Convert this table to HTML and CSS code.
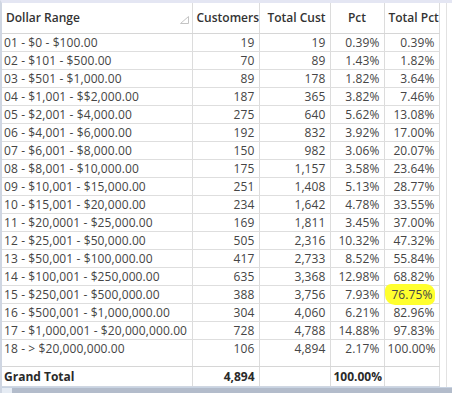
FILE: index.html
```html
<!DOCTYPE html>
<html lang="en">
<head>
    <meta charset="UTF-8">
    <title>Dollar Range Pivot</title>
    <link rel="stylesheet" href="styles.css">
</head>
<body>
    <div class="frame">
        <div class="sheet">
            <table class="pivot">
                <colgroup>
                    <col class="c-range">
                    <col class="c-cust">
                    <col class="c-total">
                    <col class="c-pct">
                    <col class="c-tpct">
                </colgroup>
                <thead>
                    <tr>
                        <th class="left">
                            <div class="head-cell">Dollar Range
                                <svg class="sort" width="9" height="8" viewBox="0 0 9 8"><path d="M0.5 7.5 L8.5 7.5 L8.5 0.5 Z" fill="none" stroke="#c4c4c4" stroke-width="1"/></svg>
                            </div>
                        </th>
                        <th>Customers</th>
                        <th>Total Cust</th>
                        <th class="mid">Pct</th>
                        <th>Total Pct</th>
                    </tr>
                </thead>
                <tbody>
                    <tr><td class="left">01 - $0 - $100.00</td><td>19</td><td>19</td><td>0.39%</td><td>0.39%</td></tr>
                    <tr><td class="left">02 - $101 - $500.00</td><td>70</td><td>89</td><td>1.43%</td><td>1.82%</td></tr>
                    <tr><td class="left">03 - $501 - $1,000.00</td><td>89</td><td>178</td><td>1.82%</td><td>3.64%</td></tr>
                    <tr><td class="left">04 - $1,001 - $$2,000.00</td><td>187</td><td>365</td><td>3.82%</td><td>7.46%</td></tr>
                    <tr><td class="left">05 - $2,001 - $4,000.00</td><td>275</td><td>640</td><td>5.62%</td><td>13.08%</td></tr>
                    <tr><td class="left">06 - $4,001 - $6,000.00</td><td>192</td><td>832</td><td>3.92%</td><td>17.00%</td></tr>
                    <tr><td class="left">07 - $6,001 - $8,000.00</td><td>150</td><td>982</td><td>3.06%</td><td>20.07%</td></tr>
                    <tr><td class="left">08 - $8,001 - $10,000.00</td><td>175</td><td>1,157</td><td>3.58%</td><td>23.64%</td></tr>
                    <tr><td class="left">09 - $10,001 - $15,000.00</td><td>251</td><td>1,408</td><td>5.13%</td><td>28.77%</td></tr>
                    <tr><td class="left">10 - $15,001 - $20,000.00</td><td>234</td><td>1,642</td><td>4.78%</td><td>33.55%</td></tr>
                    <tr><td class="left">11 - $20,0001 - $25,000.00</td><td>169</td><td>1,811</td><td>3.45%</td><td>37.00%</td></tr>
                    <tr><td class="left">12 - $25,001 - $50,000.00</td><td>505</td><td>2,316</td><td>10.32%</td><td>47.32%</td></tr>
                    <tr><td class="left">13 - $50,001 - $100,000.00</td><td>417</td><td>2,733</td><td>8.52%</td><td>55.84%</td></tr>
                    <tr><td class="left">14 - $100,001 - $250,000.00</td><td>635</td><td>3,368</td><td>12.98%</td><td>68.82%</td></tr>
                    <tr><td class="left">15 - $250,001 - $500,000.00</td><td>388</td><td>3,756</td><td>7.93%</td><td><span class="marker">76.75%</span></td></tr>
                    <tr><td class="left">16 - $500,001 - $1,000,000.00</td><td>304</td><td>4,060</td><td>6.21%</td><td>82.96%</td></tr>
                    <tr><td class="left">17 - $1,000,001 - $20,000,000.00</td><td>728</td><td>4,788</td><td>14.88%</td><td>97.83%</td></tr>
                    <tr class="last"><td class="left">18 - &gt; $20,000,000.00</td><td>106</td><td>4,894</td><td>2.17%</td><td>100.00%</td></tr>
                    <tr class="spacer"><td></td><td></td><td></td><td></td><td></td></tr>
                    <tr class="grand"><td class="left">Grand Total</td><td>4,894</td><td></td><td>100.00%</td><td></td></tr>
                </tbody>
            </table>
            <div class="side"></div>
        </div>
        <div class="hscroll">
            <div class="thumb"></div>
        </div>
    </div>
</body>
</html>
```

FILE: styles.css
```css
* {
    margin: 0;
    padding: 0;
    box-sizing: border-box;
}

body {
    background: #dfe5ee;
    font-family: 'Open Sans', 'Noto Sans', sans-serif;
    color: #454545;
}

.frame {
    width: 452px;
    height: 393px;
    border-top: 3px solid #e4e6f3;
    border-left: 2px solid #cfd6e2;
    background: #ffffff;
    display: flex;
    flex-direction: column;
}

.sheet {
    display: flex;
    flex: 1;
}

.pivot {
    border-collapse: collapse;
    table-layout: fixed;
    width: 437px;
    font-size: 12px;
}

.c-range { width: 190px; }
.c-cust { width: 67px; }
.c-total { width: 71px; }
.c-pct { width: 54px; }
.c-tpct { width: 55px; }

.pivot th {
    height: 30px;
    font-weight: 600;
    color: #333;
    text-align: right;
    padding: 0 4px;
    border-right: 1px solid #dcdcdc;
    border-bottom: 1px solid #d6d6d6;
    white-space: nowrap;
}

.pivot th.left {
    text-align: left;
    padding-left: 4px;
}

.pivot th.mid {
    text-align: center;
}

.head-cell {
    display: flex;
    align-items: center;
    justify-content: space-between;
}

.sort {
    margin-top: 4px;
    margin-right: -1px;
}

.pivot td {
    height: 18px;
    text-align: right;
    padding: 0 4px 0 3px;
    border-right: 1px solid #dcdcdc;
    border-bottom: 1px solid #dedede;
    white-space: nowrap;
    letter-spacing: 0.1px;
}

.pivot td.left {
    text-align: left;
    padding-left: 2px;
}

.pivot tr.last td {
    border-bottom: none;
}

.pivot tr.spacer td {
    height: 9px;
    border-bottom: 1px solid #d6d6d6;
}

.pivot tr.grand td {
    height: 20px;
    font-weight: 700;
    color: #2a2a2a;
    letter-spacing: 0;
    border-bottom: 1px solid #d0d7e2;
}

.marker {
    background: #ffff2e;
    border-radius: 6px 9px 7px 10px;
    padding: 2px 2px 2px 6px;
    margin-left: -6px;
}

.side {
    flex: 1;
    border-right: 1px solid #e2e2e2;
    margin-right: 5px;
}

.hscroll {
    height: 7px;
    background: #e6ecf4;
    border-top: 1px solid #c8d3e2;
    padding-left: 10px;
}

.thumb {
    height: 100%;
    background: #b3bccb;
}
```
